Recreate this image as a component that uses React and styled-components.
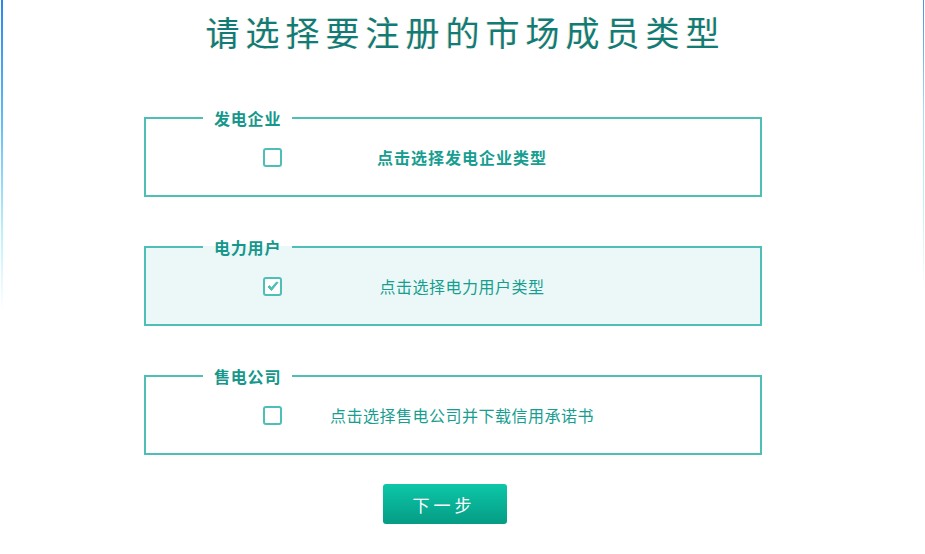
import styled, { createGlobalStyle } from "styled-components";

const GlobalStyle = createGlobalStyle`
  html, body {
    margin: 0;
    padding: 0;
    background: #fff;
  }
  body {
    font-family: "Noto Sans CJK SC", "Noto Sans", sans-serif;
  }
`;

const Page = styled.div`
  width: 925px;
  height: 554px;
  box-sizing: border-box;
  background-image:
    linear-gradient(to bottom, #2a86ef 0%, #58b6f7 35%, #bdf0fb 75%, rgba(255,255,255,0) 100%),
    linear-gradient(to bottom, #4b8fe2 0%, #b9d9f1 40%, #cdf2ee 75%, rgba(255,255,255,0) 100%);
  background-size: 2px 310px, 1px 290px;
  background-position: 1px 0, 923px 0;
  background-repeat: no-repeat;
  display: flex;
  flex-direction: column;
`;

const Title = styled.h1`
  margin: 0;
  padding: 8px 0 0 6px;
  height: 48px;
  line-height: 48px;
  text-align: center;
  font-size: 34px;
  font-weight: 400;
  letter-spacing: 6px;
  color: #117b76;
  text-shadow: -1px 0 0 rgba(214, 196, 140, 0.35);
`;

const List = styled.div`
  display: flex;
  flex-direction: column;
  gap: 40px;
  margin: 52px 0 0 144px;
  width: 618px;
`;

const Group = styled.fieldset`
  margin: 0;
  padding: 0 0 9px;
  border: 2px solid #4dbfb7;
  background: ${p => (p.$active ? "#ebf8f7" : "#fff")};
  box-sizing: border-box;
  width: 618px;
  min-width: 0;
`;

const Legend = styled.legend`
  margin-left: 57px;
  padding: 0 11px;
  height: 20px;
  line-height: 20px;
  font-size: 16px;
  font-weight: 700;
  letter-spacing: 0.8px;
  color: #15978c;
`;

const Row = styled.label`
  display: flex;
  align-items: center;
  height: 58px;
  padding-left: 117px;
  cursor: pointer;
`;

const Box = styled.span`
  width: 19px;
  height: 19px;
  box-sizing: border-box;
  border: 2px solid #4dbfb7;
  border-radius: 3px;
  background: #fff;
  display: flex;
  align-items: center;
  justify-content: center;
`;

const Caption = styled.span`
  width: 360px;
  text-align: center;
  font-size: 16px;
  letter-spacing: ${p => (p.$bold ? "1px" : "0.5px")};
  font-weight: ${p => (p.$bold ? 700 : 400)};
  color: #179e90;
`;

const Footer = styled.div`
  display: flex;
  justify-content: center;
  margin-top: 29px;
  padding-right: 35px;
`;

const NextButton = styled.button`
  width: 124px;
  height: 40px;
  border: none;
  border-radius: 3px;
  background: linear-gradient(to bottom, #0dc7a8, #059c84);
  color: #fff;
  font-family: "Noto Sans CJK SC", sans-serif;
  font-size: 17px;
  letter-spacing: 4px;
  padding-left: 4px;
  cursor: pointer;
`;

function Check() {
  return (
    <svg width="12" height="11" viewBox="0 0 12 11">
      <path d="M1 6 L4.5 9.5 L11 1.5 L9.5 1 L4.5 6.8 L2.5 4.6 Z" fill="#4dbfb7" stroke="#4dbfb7" strokeWidth="1" strokeLinejoin="round" />
    </svg>
  );
}

const types = [
  { name: "发电企业", text: "点击选择发电企业类型", bold: true },
  { name: "电力用户", text: "点击选择电力用户类型", checked: true },
  { name: "售电公司", text: "点击选择售电公司并下载信用承诺书" },
];

export default function App() {
  return (
    <>
      <GlobalStyle />
      <Page>
        <Title>请选择要注册的市场成员类型</Title>
        <List>
          {types.map(t => (
            <Group key={t.name} $active={t.checked}>
              <Legend>{t.name}</Legend>
              <Row>
                <Box>{t.checked && <Check />}</Box>
                <Caption $bold={t.bold}>{t.text}</Caption>
              </Row>
            </Group>
          ))}
        </List>
        <Footer>
          <NextButton>下一步</NextButton>
        </Footer>
      </Page>
    </>
  );
}
